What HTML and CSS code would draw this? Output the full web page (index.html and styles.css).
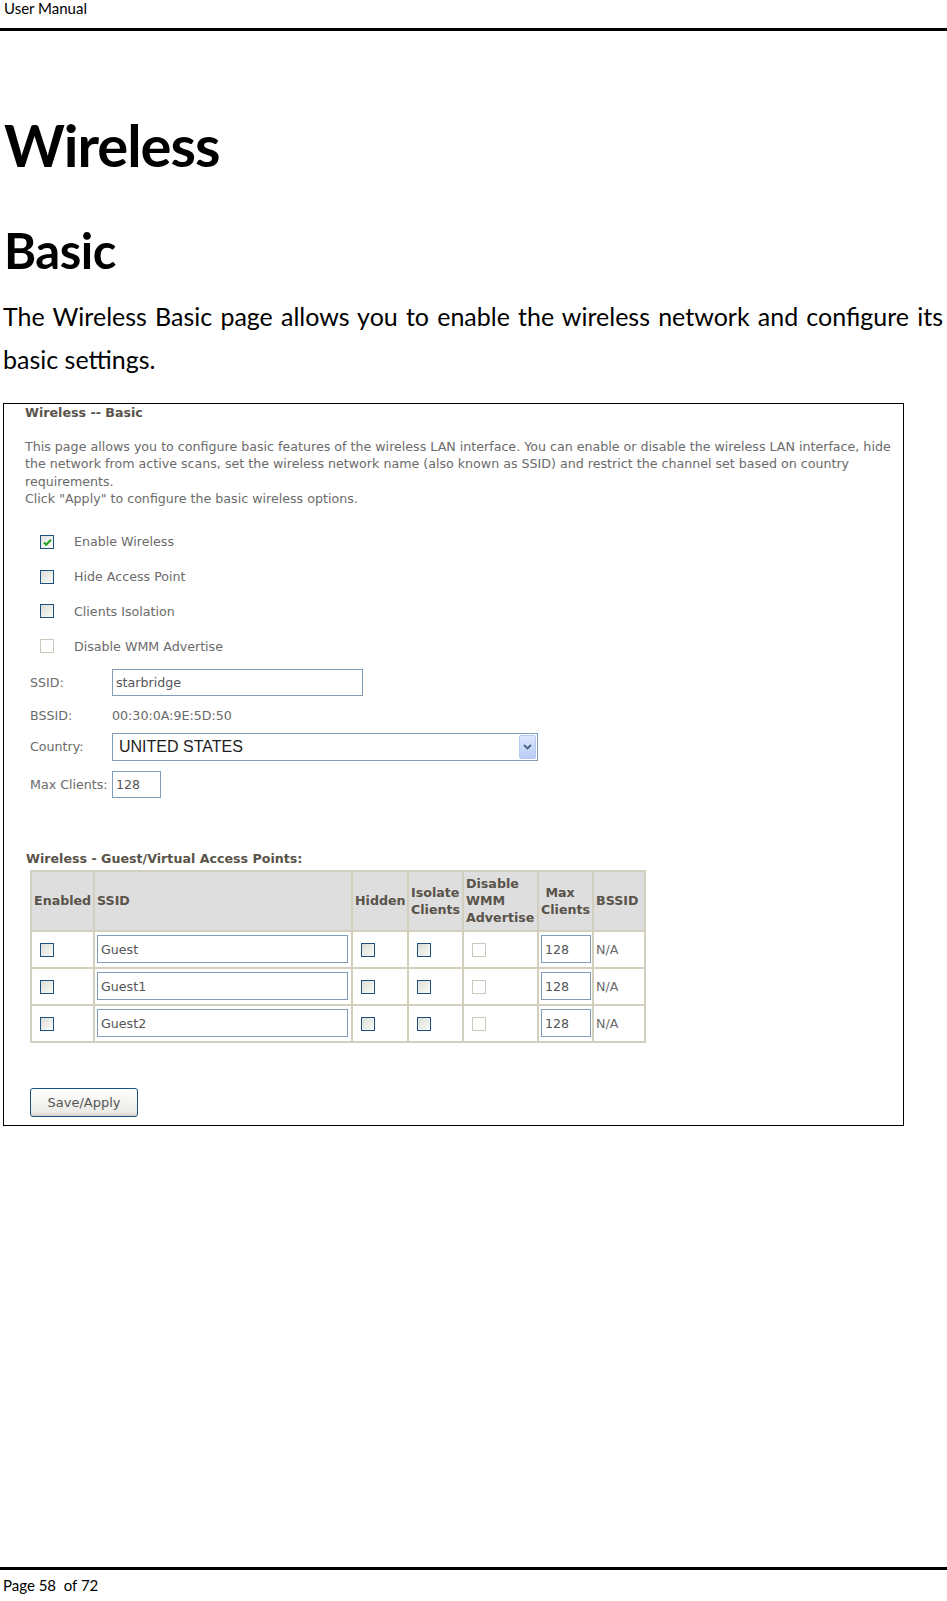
FILE: index.html
```html
<!DOCTYPE html>
<html lang="en">
<head>
    <meta charset="UTF-8">
    <title>User Manual - Wireless Basic</title>
    <link rel="stylesheet" href="styles.css">
</head>
<body>
    <div class="page">
        <header class="doc-header">User Manual</header>

        <main class="doc-body">
            <h1 class="title">Wireless</h1>
            <h2 class="subtitle">Basic</h2>
            <p class="intro">The Wireless Basic page allows you to enable the wireless network and configure its basic settings.</p>

            <!-- screenshot of the router page -->
            <div class="shot">
                <div class="shot-title">Wireless -- Basic</div>
                <p class="shot-text">
                    This page allows you to configure basic features of the wireless LAN interface. You can enable or disable the wireless LAN interface, hide<br>
                    the network from active scans, set the wireless network name (also known as SSID) and restrict the channel set based on country<br>
                    requirements.<br>
                    Click "Apply" to configure the basic wireless options.
                </p>

                <div class="checks">
                    <div class="check-row"><span class="cb checked"><svg viewBox="0 0 13 13" width="13" height="13"><path d="M3 6.5 L5.2 8.8 L10 3.8" fill="none" stroke="#21a121" stroke-width="2"/></svg></span><span>Enable Wireless</span></div>
                    <div class="check-row"><span class="cb"></span><span>Hide Access Point</span></div>
                    <div class="check-row"><span class="cb"></span><span>Clients Isolation</span></div>
                    <div class="check-row"><span class="cb disabled"></span><span>Disable WMM Advertise</span></div>
                </div>

                <div class="fields">
                    <div class="field-row">
                        <span class="field-label">SSID:</span>
                        <span class="input ssid">starbridge</span>
                    </div>
                    <div class="field-row bssid">
                        <span class="field-label">BSSID:</span>
                        <span>00:30:0A:9E:5D:50</span>
                    </div>
                    <div class="field-row country">
                        <span class="field-label">Country:</span>
                        <span class="select">
                            <span class="select-text">UNITED STATES</span>
                            <span class="select-btn"><svg viewBox="0 0 9 6" width="9" height="6"><path d="M1 1 L4.5 4.5 L8 1" fill="none" stroke="#4d6185" stroke-width="1.8"/></svg></span>
                        </span>
                    </div>
                    <div class="field-row max">
                        <span class="field-label">Max Clients:</span>
                        <span class="input small">128</span>
                    </div>
                </div>

                <div class="shot-title guest-title">Wireless - Guest/Virtual Access Points:</div>
                <table class="guest">
                    <colgroup>
                        <col style="width:63px"><col style="width:258px"><col style="width:56px"><col style="width:55px"><col style="width:75px"><col style="width:55px"><col style="width:52px">
                    </colgroup>
                    <thead>
                        <tr>
                            <th>Enabled</th>
                            <th>SSID</th>
                            <th>Hidden</th>
                            <th>Isolate<br>Clients</th>
                            <th>Disable<br>WMM<br>Advertise</th>
                            <th>&nbsp;Max<br>Clients</th>
                            <th>BSSID</th>
                        </tr>
                    </thead>
                    <tbody>
                        <tr>
                            <td><span class="cb"></span></td>
                            <td><span class="input wide">Guest</span></td>
                            <td><span class="cb"></span></td>
                            <td><span class="cb"></span></td>
                            <td><span class="cb disabled"></span></td>
                            <td><span class="input small">128</span></td>
                            <td>N/A</td>
                        </tr>
                        <tr>
                            <td><span class="cb"></span></td>
                            <td><span class="input wide">Guest1</span></td>
                            <td><span class="cb"></span></td>
                            <td><span class="cb"></span></td>
                            <td><span class="cb disabled"></span></td>
                            <td><span class="input small">128</span></td>
                            <td>N/A</td>
                        </tr>
                        <tr>
                            <td><span class="cb"></span></td>
                            <td><span class="input wide">Guest2</span></td>
                            <td><span class="cb"></span></td>
                            <td><span class="cb"></span></td>
                            <td><span class="cb disabled"></span></td>
                            <td><span class="input small">128</span></td>
                            <td>N/A</td>
                        </tr>
                    </tbody>
                </table>

                <button class="apply">Save/Apply</button>
            </div>
        </main>

        <footer class="doc-footer">Page 58&nbsp; of 72</footer>
    </div>
</body>
</html>
```

FILE: styles.css
```css
/* Global */
* {
    box-sizing: border-box;
    margin: 0;
    padding: 0;
}

body {
    font-family: Lato, "Open Sans", sans-serif;
    color: #000;
    background: #fff;
}

.page {
    display: flex;
    flex-direction: column;
    min-height: 100vh;
}

/* Document header / footer */
.doc-header {
    height: 31px;
    padding: 0 0 0 4px;
    font-size: 15px;
    line-height: 17px;
    border-bottom: 3px solid #000;
}

.doc-body {
    flex: 1;
    padding: 0 4px 0 3px;
}

.doc-footer {
    height: 34px;
    border-top: 3px solid #000;
    padding: 4px 0 0 3px;
    font-size: 15px;
    line-height: 22px;
}

/* Headings */
.title {
    font-size: 58px;
    font-weight: bold;
    letter-spacing: -1px;
    line-height: 70px;
    margin-top: 79px;
    padding-left: 1px;
}

.subtitle {
    font-size: 49px;
    font-weight: bold;
    letter-spacing: -0.5px;
    line-height: 56px;
    margin-top: 42px;
    padding-left: 1px;
}

.intro {
    font-size: 25px;
    line-height: 43px;
    text-align: justify;
    margin-top: 17px;
}

/* Screenshot box */
.shot {
    width: 901px;
    height: 723px;
    margin-top: 22px;
    border: 1px solid #000;
    padding: 1px 0 0 21px;
    font-family: "DejaVu Sans", Verdana, sans-serif;
    font-size: 12.65px;
    color: #6b6b6b;
}

.shot-title {
    font-weight: bold;
    color: #59534a;
    line-height: 16px;
}

.shot-text {
    line-height: 17.4px;
    margin-top: 17px;
}

/* Checkbox rows */
.checks {
    margin-top: 17px;
    padding-left: 15px;
}

.check-row {
    display: flex;
    align-items: center;
    gap: 20px;
    height: 34.7px;
}

.cb {
    display: inline-block;
    width: 14px;
    height: 14px;
    border: 1px solid #1c5180;
    background: linear-gradient(135deg, #dcdcd7, #fbfbf9);
    vertical-align: middle;
}

.cb svg {
    display: block;
}

.cb.checked {
    background: linear-gradient(135deg, #e4e4df, #fbfbf9);
}

.cb.disabled {
    border-color: #cbc8bb;
    background: #fff;
}

/* Labelled fields */
.fields {
    margin-top: 5px;
    padding-left: 5px;
}

.field-row {
    display: flex;
    align-items: center;
    height: 28px;
}

.field-row.bssid {
    margin-top: 4.7px;
}

.field-row.country {
    margin-top: 3.7px;
}

.field-row.max {
    margin-top: 9.8px;
}

.field-label {
    width: 82px;
}

.input {
    display: inline-flex;
    align-items: center;
    height: 27px;
    border: 1px solid #7f9db9;
    padding: 0 3px;
    background: #fff;
    color: #555;
}

.input.ssid {
    width: 251px;
}

.input.small {
    width: 49px;
}

.input.wide {
    width: 251px;
}

.select {
    display: flex;
    align-items: center;
    width: 426px;
    height: 28px;
    border: 1px solid #7f9db9;
    padding: 1px;
}

.select-text {
    flex: 1;
    padding-left: 5px;
    font-family: "Liberation Sans", Arial, sans-serif;
    font-size: 16px;
    color: #1d1d1d;
}

.select-btn {
    width: 17px;
    height: 100%;
    display: flex;
    align-items: center;
    justify-content: center;
    border: 1px solid #b6c8f0;
    border-radius: 2px;
    background: linear-gradient(#dde8ff, #b8ccf6);
}

/* Guest table */
.guest-title {
    margin-top: 52px;
    padding-left: 1px;
}

.guest {
    margin: 3px 0 0 5px;
    border-collapse: collapse;
    table-layout: fixed;
    width: 614px;
}

.guest th,
.guest td {
    border: 2px solid #d3cfbf;
    padding: 0 2px;
    text-align: left;
    vertical-align: middle;
}

.guest th {
    height: 60px;
    background: #dedede;
    color: #59534a;
    font-weight: bold;
    line-height: 17px;
}

.guest td {
    height: 37px;
}

.guest td .cb {
    margin-left: 6px;
}

.guest td .input {
    height: 28px;
}

.guest td .input.small {
    width: 50px;
}

/* Button */
.apply {
    display: block;
    margin: 45px 0 0 5px;
    width: 108px;
    height: 29px;
    font-family: inherit;
    font-size: 13px;
    color: #555;
    border: 1px solid #1c5180;
    border-radius: 3px;
    background: linear-gradient(#ffffff, #ecebe6 85%, #d6d0c5);
    cursor: pointer;
}
```
